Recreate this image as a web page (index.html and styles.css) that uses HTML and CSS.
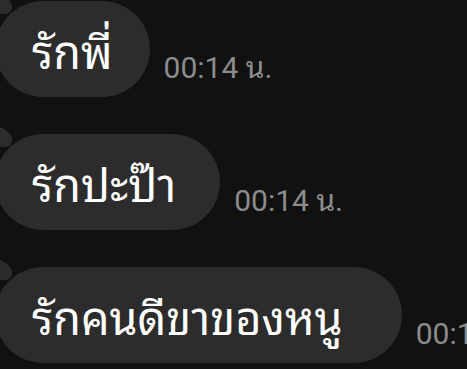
FILE: index.html
```html
<!DOCTYPE html>
<html lang="th">
<head>
<meta charset="utf-8">
<link rel="stylesheet" href="styles.css">
</head>
<body>
<div class="chat">
  <div class="row">
    <div class="bubble"><span class="text">รักพี่</span></div>
    <span class="time">00:14 น.</span>
  </div>
  <div class="row">
    <div class="bubble bubble-mid"><span class="text">รักปะป๊า</span></div>
    <span class="time">00:14 น.</span>
  </div>
  <div class="row">
    <div class="bubble bubble-wide"><span class="text">รักคนดีขาของหนู</span></div>
    <span class="time">00:14 น.</span>
  </div>
</div>
</body>
</html>
```

FILE: styles.css
```css
html, body {
  margin: 0;
  padding: 0;
  background: #111111;
  width: 467px;
  height: 369px;
  overflow: hidden;
}

.chat {
  display: flex;
  flex-direction: column;
  gap: 37px;
  padding-top: 1px;
}

.row {
  display: flex;
  align-items: flex-end;
  white-space: nowrap;
}

.bubble {
  position: relative;
  display: flex;
  align-items: center;
  height: 96px;
  box-sizing: border-box;
  margin-left: -5px;
  padding: 0 37px 0 37px;
  background: #2c2c2c;
  border-radius: 48px;
  flex-shrink: 0;
}

.bubble::before {
  content: "";
  position: absolute;
  left: -8px;
  top: -6px;
  width: 26px;
  height: 18px;
  background: #2c2c2c;
  border-radius: 50%;
  transform: rotate(30deg);
}

.bubble-mid {
  padding-right: 44px;
}

.bubble-wide {
  padding-right: 59px;
}

.text {
  position: relative;
  color: #ffffff;
  font-family: "Noto Sans Thai Looped", "Noto Sans Thai", "Noto Sans", "DejaVu Sans", sans-serif;
  font-size: 45px;
  font-weight: 400;
  line-height: 1;
}

.time {
  margin-left: 14px;
  margin-bottom: 14px;
  color: #8c8c8c;
  font-family: Roboto, "Noto Sans Thai Looped", "Noto Sans Thai", sans-serif;
  font-size: 30px;
  line-height: 1;
}
```
